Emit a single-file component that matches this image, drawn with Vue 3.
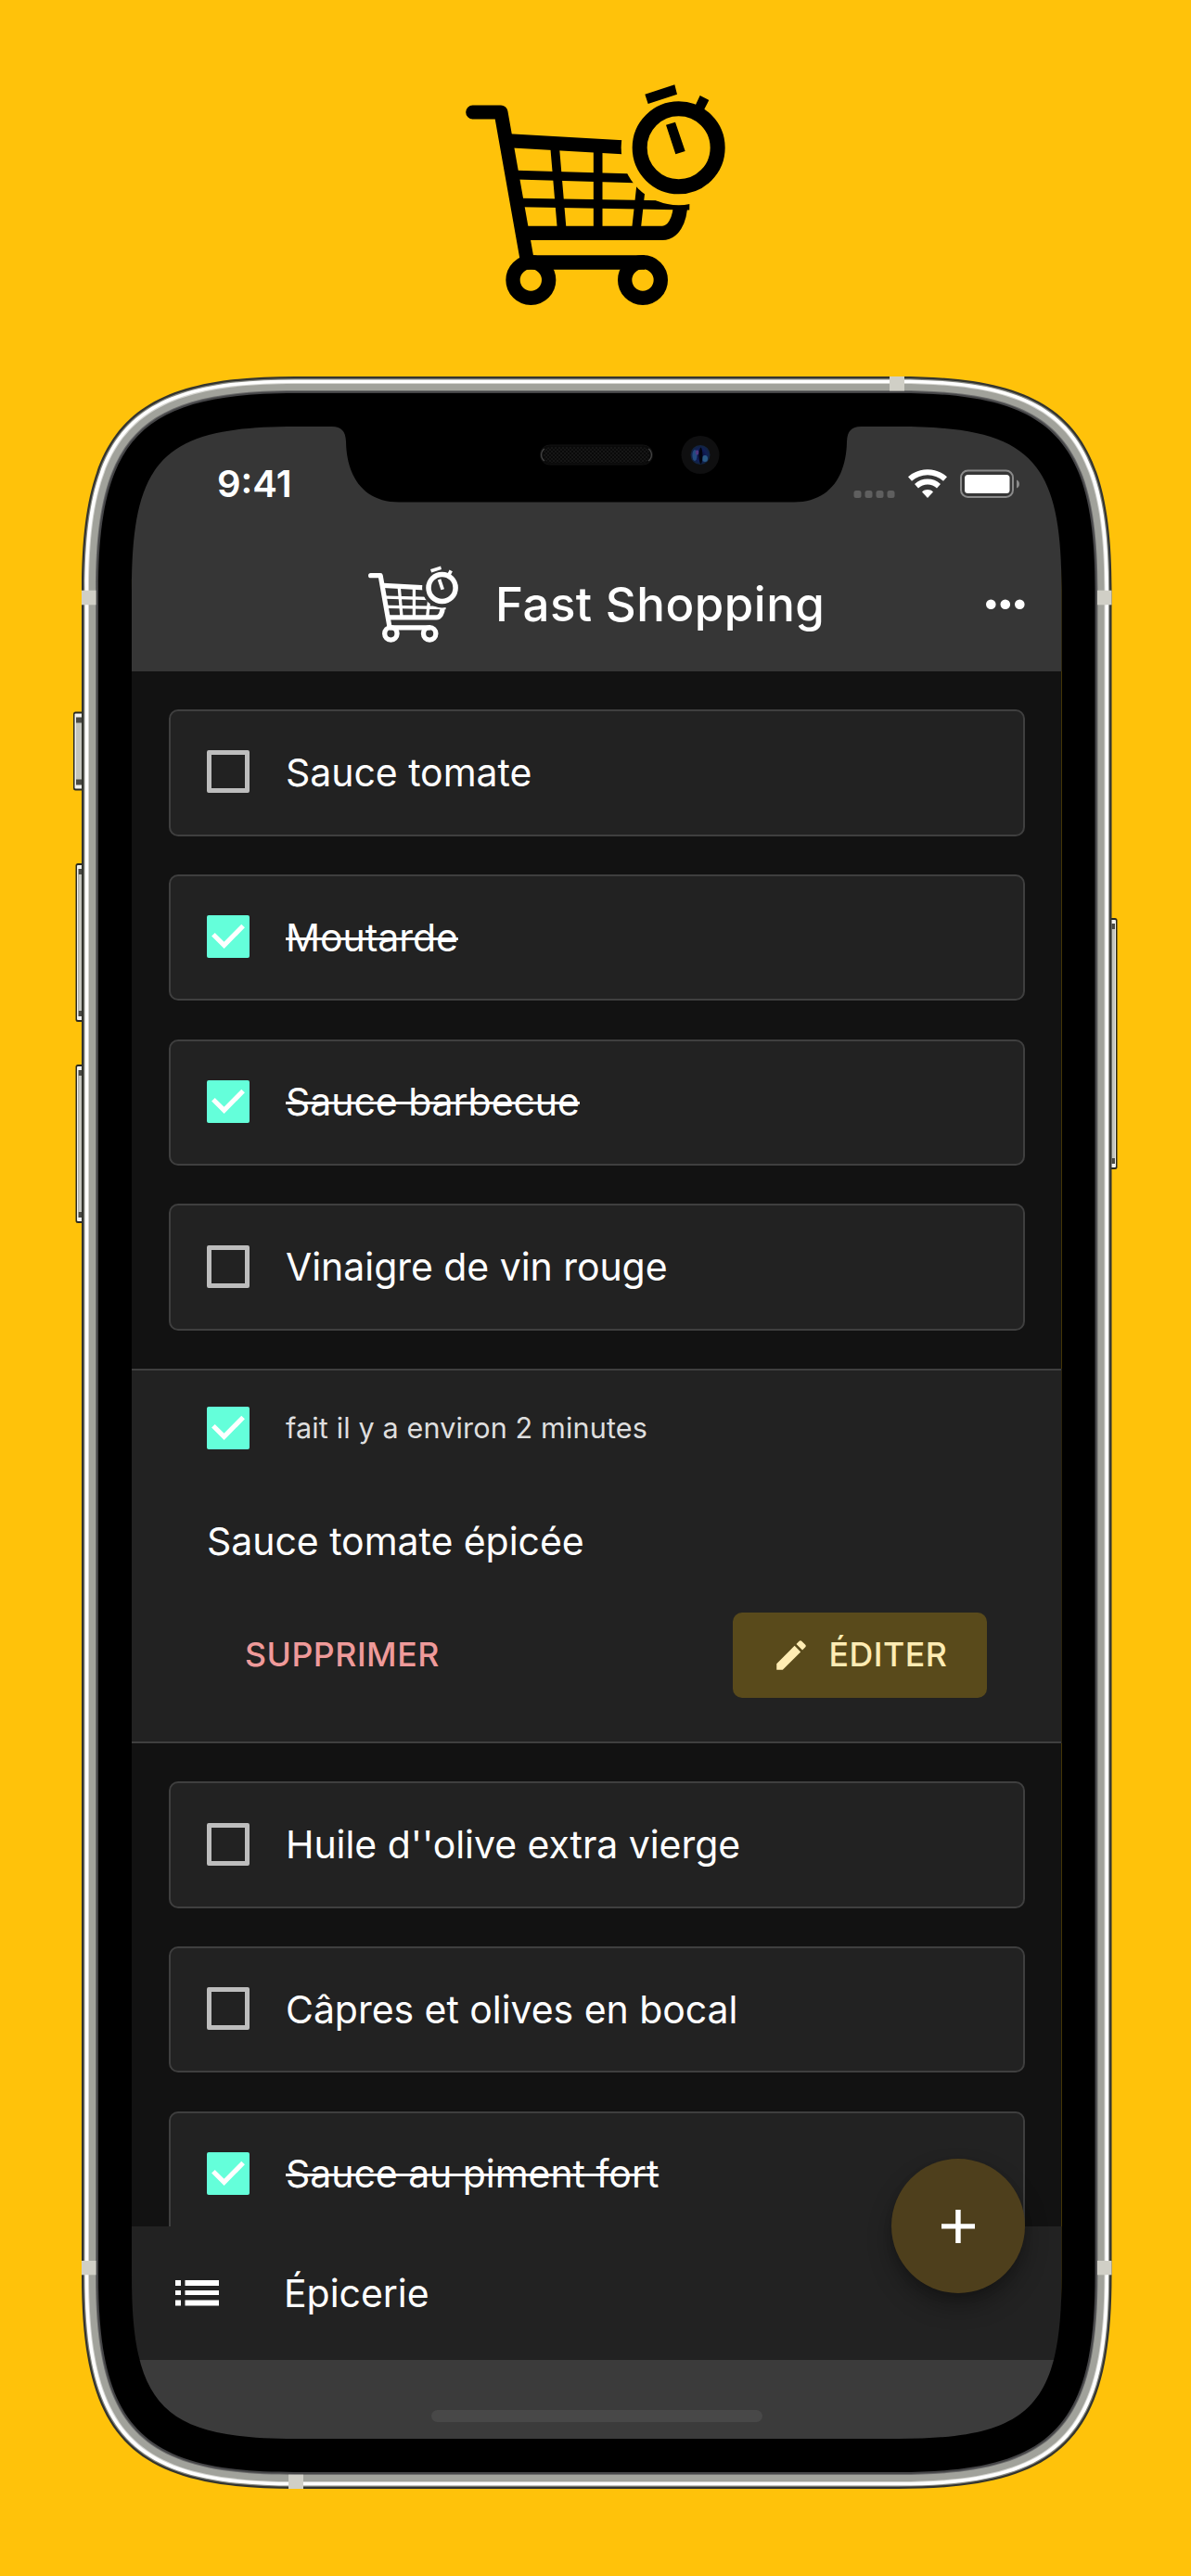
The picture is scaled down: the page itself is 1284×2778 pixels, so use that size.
<script setup>
const before = [
  { label: 'Sauce tomate', done: false },
  { label: 'Moutarde', done: true },
  { label: 'Sauce barbecue', done: true },
  { label: 'Vinaigre de vin rouge', done: false },
]
const after = [
  { label: "Huile d''olive extra vierge", done: false },
  { label: 'Câpres et olives en bocal', done: false },
  { label: 'Sauce au piment fort', done: true },
]

const W = 1110.5
const H = 2278

// Rounded rectangle with soft, continuous corners, inset by d from the phone's outline.
function outline(d) {
  const a = 230
  const c = 54 + 0.64 * d
  const R = W - d
  const B = H - d
  return [
    `M${a} ${d}`,
    `H${W - a}`,
    `C${W - c} ${d} ${R} ${c} ${R} ${a}`,
    `V${H - a}`,
    `C${R} ${H - c} ${W - c} ${B} ${W - a} ${B}`,
    `H${a}`,
    `C${c} ${B} ${d} ${H - c} ${d} ${H - a}`,
    `V${a}`,
    `C${d} ${c} ${c} ${d} ${a} ${d}Z`,
  ].join(' ')
}

const rim = outline(30)
const hole = outline(54)
const layers = [
  { d: outline(0) + rim, fill: '#33342f' },
  { d: outline(2.2) + rim, fill: '#85867f' },
  { d: outline(3.4) + rim, fill: '#ffffff' },
  { d: outline(7) + rim, fill: '#d5d5d0' },
  { d: outline(8) + rim, fill: '#a1a29b' },
  { d: outline(15) + rim, fill: '#6b6b6b' },
  { d: outline(16) + rim, fill: '#454547' },
  { d: outline(18) + hole, fill: '#000000' },
]

const sideButtons = [
  { x: 79, y: 767.5, w: 12, h: 85 },
  { x: 81.5, y: 931, w: 9, h: 171 },
  { x: 81.5, y: 1148, w: 9, h: 171 },
  { x: 1195.5, y: 990, w: 9, h: 271 },
]
const bands = [
  { x: 0, y: 230.7, w: 15.5, h: 15.6 },
  { x: 1095, y: 230.7, w: 15.5, h: 15.6 },
  { x: 0, y: 2032, w: 15.5, h: 15.3 },
  { x: 1095, y: 2032, w: 15.5, h: 15.3 },
  { x: 871, y: 0, w: 16, h: 15.5 },
  { x: 223, y: 2262.7, w: 16, h: 15.3 },
]
</script>

<template>
  <div class="page">
    <svg class="defs" width="0" height="0">
      <defs>
        <mask id="around-clock" maskUnits="userSpaceOnUse" x="0" y="0" width="1000" height="900">
          <rect width="1000" height="900" fill="#fff" />
          <circle cx="755" cy="267" r="186" fill="#000" />
        </mask>
        <symbol id="cart" viewBox="66 62 840 714">
          <g fill="none" stroke="currentColor">
            <path d="M89 152H180L265 632" stroke-width="45" stroke-linecap="round" stroke-linejoin="round" />
            <g mask="url(#around-clock)">
              <path d="M205 244L600 267" stroke-width="45" />
              <path d="M230 355L640 367M245 444.500L790 454" stroke-width="29" />
              <path d="M354 260L377 530M494 265V530M635 375L618 530" stroke-width="29" />
              <path d="M255 543H702C734 543 761 508 761 440" stroke-width="46" />
            </g>
            <path d="M265 638H645" stroke-width="46" />
            <circle cx="755" cy="267" r="126" stroke-width="48" />
          </g>
          <g fill="none" stroke="currentColor" stroke-width="46">
            <circle cx="277" cy="695" r="58" />
            <circle cx="639" cy="695" r="58" />
          </g>
          <path fill="currentColor" d="M646 94L742 63L750 94L656 125ZM824 98L853 113L834 150L806 136ZM714 193L744 184L776 278L745 288Z" />
        </symbol>
      </defs>
    </svg>

    <svg class="logo"><use href="#cart" /></svg>

    <div class="phone">
      <svg class="buttons" width="1284" height="2778" viewBox="0 0 1284 2778">
        <g v-for="b in sideButtons" :key="b.y">
          <rect :x="b.x" :y="b.y" :width="b.w" :height="b.h" rx="2.500" fill="#2b2a20" />
          <rect :x="b.x + 1.500" :y="b.y + 2" :width="b.w - 3" :height="b.h - 4" rx="1" fill="#f2f2ee" />
          <rect :x="b.x + 3" :y="b.y + 6" :width="b.w - 5.500" :height="b.h - 12" fill="#4a4a44" />
          <rect :x="b.x + 3" :y="b.y + 12" :width="b.w - 5.500" :height="b.h - 24" fill="#c4c5bd" />
        </g>
      </svg>

      <div class="screen">
        <header class="top">
          <div class="status">
            <span class="time">9:41</span>
            <svg class="signal" width="180" height="32" viewBox="0 0 180 32">
              <g fill="#5f5f5f">
                <rect x="0.500" y="23" width="8" height="8" rx="2.500" />
                <rect x="12.500" y="23" width="8" height="8" rx="2.500" />
                <rect x="24.500" y="23" width="8" height="8" rx="2.500" />
                <rect x="36.500" y="23" width="8" height="8" rx="2.500" />
              </g>
              <g fill="none" stroke="#fff" stroke-width="6">
                <path d="M61 10.500C72 0.700 88 0.700 99 10.500" />
                <path d="M68 18.200C75 12 85 12 92 18.200" />
              </g>
              <path d="M74 24.500C77.500 21.300 82.500 21.300 86 24.500L80 31Z" fill="#fff" />
              <rect x="116" y="1.500" width="56" height="28.500" rx="7.500" fill="none" stroke="#8a8a8a" stroke-width="2" />
              <rect x="120" y="6" width="48.500" height="20" rx="3.500" fill="#fff" />
              <path d="M176 11.500C180 13 180 19 176 20.500Z" fill="#8a8a8a" />
            </svg>
          </div>
          <div class="appbar">
            <svg class="mark"><use href="#cart" /></svg>
            <h1 class="title">Fast Shopping</h1>
            <svg class="more" width="42" height="12" viewBox="0 0 42 12" fill="#fff">
              <circle cx="5.300" cy="5.700" r="5.300" />
              <circle cx="20.800" cy="5.700" r="5.300" />
              <circle cx="36.300" cy="5.700" r="5.300" />
            </svg>
          </div>
        </header>

        <main class="list">
          <div v-for="item in before" :key="item.label" class="card">
            <span class="box" :class="{ checked: item.done }">
              <svg v-if="item.done" viewBox="0 0 46 46"><path d="M6.900 20.700L18.600 32.400L39.100 11.500" /></svg>
            </span>
            <span class="label" :class="{ struck: item.done }">{{ item.label }}</span>
          </div>

          <section class="open">
            <div class="when">
              <span class="box checked">
                <svg viewBox="0 0 46 46"><path d="M6.900 20.700L18.600 32.400L39.100 11.500" /></svg>
              </span>
              <span class="ago">fait il y a environ 2 minutes</span>
            </div>
            <div class="label name">Sauce tomate épicée</div>
            <div class="actions">
              <button class="remove">SUPPRIMER</button>
              <button class="edit">
                <svg width="42" height="42" viewBox="0 0 24 24" fill="currentColor">
                  <path d="M3 17.250V21h3.750L17.810 9.940l-3.750-3.750L3 17.250zM20.710 7.040c.39-.39.39-1.020 0-1.410l-2.340-2.340c-.39-.39-1.020-.39-1.410 0l-1.830 1.830 3.750 3.750 1.830-1.830z" />
                </svg>
                <span>ÉDITER</span>
              </button>
            </div>
          </section>

          <div v-for="item in after" :key="item.label" class="card">
            <span class="box" :class="{ checked: item.done }">
              <svg v-if="item.done" viewBox="0 0 46 46"><path d="M6.900 20.700L18.600 32.400L39.100 11.500" /></svg>
            </span>
            <span class="label" :class="{ struck: item.done }">{{ item.label }}</span>
          </div>
        </main>

        <footer class="bottom">
          <svg width="47" height="28" viewBox="0 0 47 28" fill="#fff">
            <path d="M0 0H6V6H0ZM0 11H6V16H0ZM0 21.500H6V27.500H0ZM10.500 0H47V6H10.500ZM10.500 11H47V16H10.500ZM10.500 21.500H47V27.500H10.500Z" />
          </svg>
          <span class="label">Épicerie</span>
          <button class="fab">
            <svg width="36" height="36" viewBox="0 0 36 36"><path d="M15.200 0H20.700V36H15.200ZM0 15.200H36V20.400H0Z" fill="#fff" /></svg>
          </button>
        </footer>
        <div class="safe"><span class="home"></span></div>
      </div>

      <svg class="frame" width="1110.500" height="2278" viewBox="0 0 1110.500 2278">
        <defs>
          <radialGradient id="lens" cx="0.500" cy="0.500" r="0.500">
            <stop offset="0" stop-color="#0a0d3a" />
            <stop offset="0.600" stop-color="#111f58" />
            <stop offset="1" stop-color="#12243e" />
          </radialGradient>
          <pattern id="mesh" width="4" height="4" patternUnits="userSpaceOnUse">
            <rect width="4" height="4" fill="#161616" />
            <path d="M0 0h2v2h-2zM2 2h2v2h-2z" fill="#0a0a0a" />
          </pattern>
        </defs>
        <path v-for="l in layers" :key="l.fill" :d="l.d" :fill="l.fill" fill-rule="evenodd" />
        <rect v-for="b in bands" :key="b.x + '-' + b.y" :x="b.x" :y="b.y" :width="b.w" :height="b.h" fill="#d0cfc6" />
        <path d="M262 52V54H270C280 54 284.500 59 285 70C285.500 108 304 135.500 342 135.500H768C806 135.500 824.500 108 825 70C825.500 59 830 54 840 54H848V52Z" fill="#000" />
        <rect x="494.500" y="74" width="121" height="21" rx="10" fill="#0a0a0a" stroke="#121212" stroke-width="1" />
        <path d="M499 78C494.500 81 494.500 88 499 91M611 78C615.500 81 615.500 88 611 91" fill="none" stroke="#444" stroke-width="1.300" />
        <rect x="498" y="76" width="114" height="17" rx="8" fill="url(#mesh)" />
        <circle cx="667" cy="84.500" r="20.500" fill="#0f0f10" />
        <circle cx="667" cy="84.500" r="10.500" fill="url(#lens)" />
        <ellipse cx="661" cy="85" rx="2.600" ry="6" fill="#234a80" />
        <ellipse cx="672" cy="88.500" rx="3" ry="3.500" fill="#2a5a86" />
        <ellipse cx="663.500" cy="82" rx="1.800" ry="2.800" fill="#4f3780" />
        <ellipse cx="667.500" cy="85.500" rx="1.900" ry="9" fill="#03040f" />
      </svg>
    </div>
  </div>
</template>

<style>
body {
  margin: 0;
  background: #ffc20a;
}
</style>

<style scoped>
.page {
  width: 1284px;
  height: 2778px;
  box-sizing: border-box;
  padding-top: 91px;
  display: flex;
  flex-direction: column;
  background: #ffc20a;
  overflow: hidden;
  font-family: Inter, 'Liberation Sans', sans-serif;
  color: #fff;
}
.defs {
  position: absolute;
}
.logo {
  display: block;
  width: 280px;
  height: 238px;
  margin-left: 502px;
  color: #000;
  flex: none;
}
.phone {
  position: relative;
  width: 1110.5px;
  height: 2278px;
  box-sizing: border-box;
  margin: 77px 0 0 88px;
  padding: 54px;
  flex: none;
}
.buttons {
  position: absolute;
  left: -88px;
  top: -406px;
}
.frame {
  position: absolute;
  left: 0;
  top: 0;
  pointer-events: none;
}
.screen {
  position: relative;
  width: 1002.5px;
  height: 2170px;
  display: flex;
  flex-direction: column;
  background: #121212;
  clip-path: inset(0 round 80px);
}
.top {
  height: 264px;
  background: #363636;
  flex: none;
}
.status {
  height: 120px;
  box-sizing: border-box;
  padding: 4px 45px 0 92px;
  display: flex;
  align-items: center;
  justify-content: space-between;
}
.time {
  font-size: 40px;
  font-weight: 600;
  line-height: 48px;
}
.signal {
  display: block;
}
.appbar {
  height: 144px;
  box-sizing: border-box;
  padding: 0 40px 0 255px;
  display: flex;
  align-items: center;
}
.mark {
  width: 97px;
  height: 83px;
  margin-bottom: 1px;
  flex: none;
}
.title {
  margin: 0 0 1px 40px;
  font-size: 51px;
  line-height: 60px;
  font-weight: 500;
  letter-spacing: 0.5px;
  white-space: nowrap;
}
.more {
  margin-left: auto;
}
.list {
  height: 1677px;
  box-sizing: border-box;
  padding-top: 41.3px;
  display: flex;
  flex-direction: column;
  gap: 41.3px;
  overflow: hidden;
  flex: none;
}
.card {
  height: 136.4px;
  box-sizing: border-box;
  margin: 0 40px;
  padding: 0 39px 2px;
  border: 2px solid #3f3f3f;
  border-radius: 10px;
  background: #222;
  display: flex;
  align-items: center;
  gap: 39px;
  flex: none;
}
.card .label {
  padding-top: 1px;
}
.box {
  width: 46px;
  height: 46px;
  box-sizing: border-box;
  border: 5px solid #bdbdbd;
  border-radius: 2px;
  flex: none;
}
.box.checked {
  border: 0;
  background: #64ffda;
}
.box svg {
  display: block;
}
.box path {
  fill: none;
  stroke: #fff;
  stroke-width: 5.1;
}
.label {
  font-size: 41px;
  line-height: 50px;
  letter-spacing: -0.05px;
  white-space: nowrap;
}
.struck {
  text-decoration: line-through;
  text-decoration-thickness: 3px;
}
.open {
  height: 404px;
  box-sizing: border-box;
  padding: 39px 80.5px 0 81px;
  border-top: 2px solid #3f3f3f;
  border-bottom: 2px solid #3f3f3f;
  background: #222;
  flex: none;
}
.when {
  display: flex;
  align-items: center;
  gap: 39px;
}
.ago {
  font-size: 30.6px;
  line-height: 40px;
  letter-spacing: 0.12px;
  color: #dedede;
}
.name {
  margin-top: 74px;
}
.actions {
  margin-top: 52px;
  display: flex;
  align-items: center;
  justify-content: space-between;
}
button {
  border: 0;
  margin: 0;
  color: inherit;
  font-family: inherit;
  background: none;
}
.remove,
.edit {
  height: 92px;
  font-size: 35.7px;
  font-weight: 500;
  line-height: 44px;
  letter-spacing: 0.5px;
}
.remove {
  padding: 0 41px 2px;
  color: #ef9a9a;
}
.edit {
  width: 274px;
  padding: 0 0 2px 41.5px;
  border-radius: 10px;
  background: #594a1b;
  color: #ffecb3;
  display: flex;
  align-items: center;
  gap: 20px;
}
.edit svg {
  margin-top: 1px;
}
.bottom {
  position: relative;
  height: 144px;
  padding-left: 47px;
  background: #222;
  display: flex;
  align-items: center;
  gap: 70px;
  flex: none;
}
.fab {
  position: absolute;
  left: 819px;
  top: -73px;
  width: 144px;
  height: 145px;
  padding: 0;
  border-radius: 50%;
  background: #4e3f1c;
  display: flex;
  align-items: center;
  justify-content: center;
  box-shadow: 0 14px 26px rgba(0, 0, 0, 0.3), 0 4px 8px rgba(0, 0, 0, 0.12);
}
.safe {
  flex: 1;
  padding-top: 54px;
  background: #3b3b3b;
}
.home {
  display: block;
  width: 357px;
  height: 13px;
  margin: 0 auto;
  border-radius: 7px;
  background: #484848;
}
</style>
